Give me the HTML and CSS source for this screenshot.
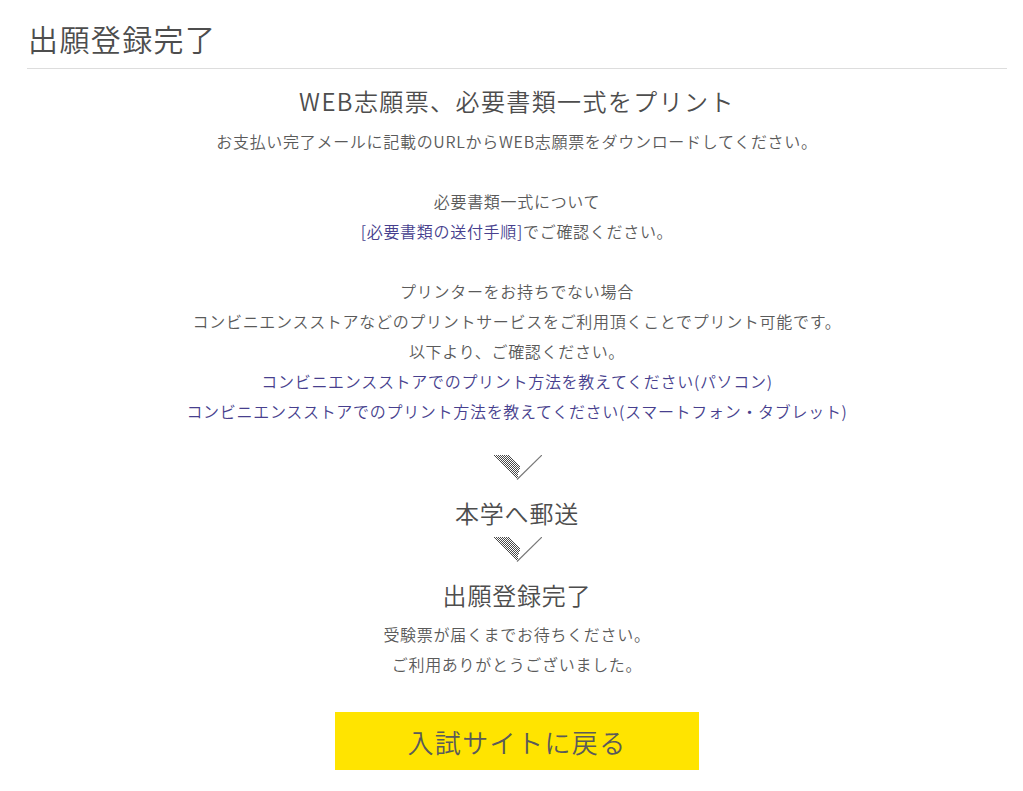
FILE: index.html
```html
<!DOCTYPE html>
<html lang="ja">
<head>
    <meta charset="UTF-8">
    <title>出願登録完了</title>
    <link rel="stylesheet" href="styles.css">
</head>
<body>
    <div class="page">
        <h1 class="page-title">出願登録完了</h1>

        <div class="complete-body">
            <h2 class="step-title first">WEB志願票、必要書類一式をプリント</h2>
            <p class="step-text">
                お支払い完了メールに記載のURLからWEB志願票をダウンロードしてください。<br>
                <br>
                必要書類一式について<br>
                <a href="#">[必要書類の送付手順]</a>でご確認ください。<br>
                <br>
                プリンターをお持ちでない場合<br>
                コンビニエンスストアなどのプリントサービスをご利用頂くことでプリント可能です。<br>
                以下より、ご確認ください。<br>
                <a href="#">コンビニエンスストアでのプリント方法を教えてください(パソコン)</a><br>
                <a href="#">コンビニエンスストアでのプリント方法を教えてください(スマートフォン・タブレット)</a>
            </p>

            <svg class="step-arrow first-arrow" width="50" height="25" viewBox="0 0 50 25">
                <defs>
                    <pattern id="checker" width="2" height="2" patternUnits="userSpaceOnUse">
                        <rect x="0" y="0" width="1" height="1" fill="#4a4a4a"/>
                        <rect x="1" y="1" width="1" height="1" fill="#4a4a4a"/>
                    </pattern>
                </defs>
                <polygon points="0,0 17,0 28,12 25,25" fill="url(#checker)" shape-rendering="crispEdges"/>
                <line x1="25" y1="24.5" x2="50" y2="0" stroke="#777" stroke-width="1.2"/>
            </svg>

            <h2 class="step-title">本学へ郵送</h2>

            <svg class="step-arrow" width="50" height="25" viewBox="0 0 50 25">
                <polygon points="0,0 17,0 28,12 25,25" fill="url(#checker)" shape-rendering="crispEdges"/>
                <line x1="25" y1="24.5" x2="50" y2="0" stroke="#777" stroke-width="1.2"/>
            </svg>

            <h2 class="step-title">出願登録完了</h2>
            <p class="step-text">
                受験票が届くまでお待ちください。<br>
                ご利用ありがとうございました。
            </p>

            <a class="back-btn" href="#">入試サイトに戻る</a>
        </div>
    </div>
</body>
</html>
```

FILE: styles.css
```css
:root {
    --text: #5a5a5a;
    --title: #4d4d4d;
    --link: #473f8e;
    --line: #dddddd;
    --yellow: #ffe400;
}
body { margin: 0; background: #ffffff; color: var(--text); font-family: "Noto Sans CJK JP", "Noto Sans", sans-serif; font-weight: 350; }
.page { width: 980px; margin-left: 27px; }
.page-title { margin: 0; padding: 18px 0 10px 1px; font-size: 30px; line-height: 40px; font-weight: 350; color: var(--title); border-bottom: 1px solid var(--line); letter-spacing: 1.4px; }
.complete-body { display: flex; flex-direction: column; align-items: center; text-align: center; }
.step-title { margin: 16px 0 7px; font-size: 24px; line-height: 34px; font-weight: 350; color: var(--title); letter-spacing: 0.8px; }
.step-title.first { margin: 15px 0 8px; letter-spacing: 1.4px; }
.step-text { margin: 0; font-size: 16px; line-height: 30px; letter-spacing: 0.7px; }
.step-text a { color: var(--link); text-decoration: none; }
.step-arrow { display: block; }
.step-arrow.first-arrow { margin-top: 29px; }
.back-btn { display: flex; justify-content: center; align-items: center; width: 364px; height: 58px; margin-top: 33px; background: var(--yellow); color: var(--text); font-size: 26px; font-weight: 350; text-decoration: none; letter-spacing: 1.4px; }
```
